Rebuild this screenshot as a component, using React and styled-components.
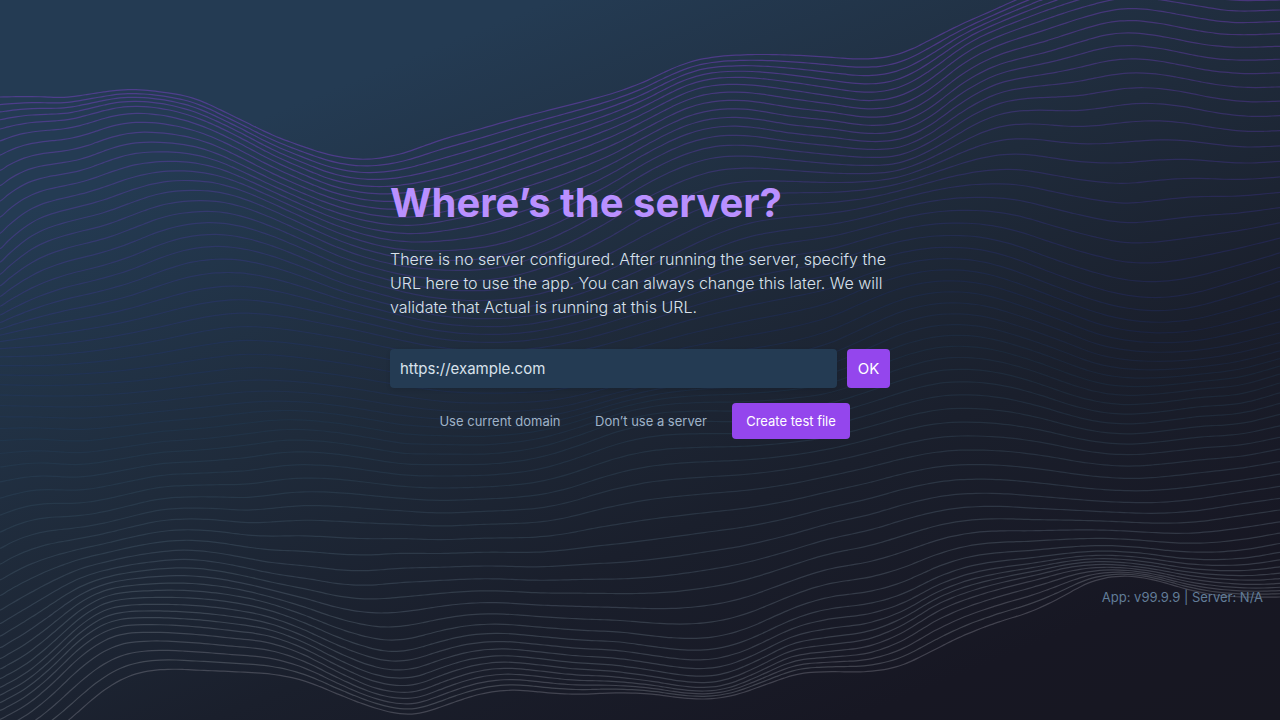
import React from 'react';
import styled, { createGlobalStyle, css } from 'styled-components';

const GlobalStyle = createGlobalStyle`
  *, *::before, *::after { box-sizing: border-box; }
  html, body { margin: 0; padding: 0; }
  body {
    background: #181722;
    color: #d9e2ec;
    font-family: Inter, "Liberation Sans", sans-serif;
    font-size: 13px;
  }
`;

/* Contour lines: each entry is [line index, flat list of x, y points]. */
const KEY_CURVES = [
  [0, [0,97,35,96.5,65,97.5,90,94,127,89.5,165,92.5,190,97,233,116,277,137,300,145.5,333,155.7,363,159.5,390,156.5,447,138,480,129,513,119.5,547,110.7,580,102.3,613,93.3,647,80.7,670,69.5,693,61,713,57,733,55.3,797,55.3,830,57.3,862,59,890,56.5,910,50,930,40,963,23.5,987,13,1016,0,1050,-14,1127,-34,1190,-38,1280,-30]],
  [4, [0,129,20,124,43,121.5,67,120,90,114.5,115,108,133,106.3,165,109,200,119,233,134,277,157,300,167,333,180,377,186.7,413,183.5,447,176,480,166,513,155,547,143,580,132,613,120,647,105,670,93,693,83,713,78.5,733,77.3,797,83,830,88,873,92.3,897,88.3,917,79,930,70.7,963,46.7,980,37,997,29.5,1030,16.5,1078,0,1127,-11,1190,-6,1230,0,1280,0]],
  [8, [0,185.7,17,174,37,166.7,63,162.7,83,158.7,110,148.7,133,143,160,142.3,187,145,213,152,240,164,273,180,300,192,333,205,367,214,390,217,413,217,447,211,480,202,513,191,547,180,580,168,613,154,647,136,670,124,693,114.5,713,110,733,108.7,797,117,830,120.3,870,125.5,890,124.5,910,119,930,108,960,85,980,73,1000,64,1017,59.3,1047,52,1080,42,1105,35,1128,32.7,1160,36,1190,42,1215,46,1240,47.3,1280,46.3]],
  [13, [0,262.3,17,246.5,37,232.5,60,224,83,218,103,213,133,202,160,193.5,195,190.3,220,192.3,240,197.5,267,208,300,223,333,238,367,250,400,257.5,430,260,467,260,500,256,547,240,600,213,650,182,690,164,715,157.5,745,156,790,160,830,163.7,870,165.5,895,164,920,155.5,945,142,970,127,990,117.5,1010,112,1030,110.3,1080,110.5,1105,107.5,1125,104.5,1150,103.3,1180,106,1215,112.5,1250,116.5,1280,115.7]],
  [18, [0,315,30,300,60,289,100,279,133,269,160,258,190,249,220,246.3,245,249,275,257,310,270,345,284,380,294,430,306,480,310,520,308,570,297,620,279,670,256,710,237,750,223,790,217,830,213.3,870,206.5,910,196,950,187.5,975,184.5,997,183.7,1020,185,1050,191,1090,199,1127,203.3,1160,200,1190,197,1240,196,1280,192.3]],
  [23, [0,348.7,60,344,110,337,160,327,200,318,240,313,280,316,320,323,360,331,400,340,430,346,480,351,530,349,580,340,640,323,700,304,750,291,790,283,830,275,870,261,900,253,930,248,953,247.3,980,249.5,1010,257,1050,272,1090,286,1125,295,1157,297.7,1190,294,1230,283,1280,267.3]],
  [28, [0,395,60,396,100,395,150,391,200,385,253,380,300,382,350,388,400,396,450,402,500,403,560,399,620,385,680,371,740,362,790,354,830,343,870,325,900,312,930,304.5,950,302.7,980,305,1020,316,1060,330,1100,345,1140,351.5,1165,352.3,1200,350,1230,345,1280,333]],
  [34, [0,467,33,463,83,464.5,120,459,160,452.5,200,450,240,446,290,440,330,442,370,448,400,453,440,454,500,453,540,447,580,435,620,421,660,413,700,411,740,411,780,409,830,403,870,391,910,377.5,940,370.5,968,369.3,1000,373,1040,384,1075,396,1105,403,1130,404.7,1160,402.5,1200,397.5,1240,394,1280,383]],
  [39, [0,548.3,20,538.5,45,531.5,73,528.3,100,524,133,516,160,510,190,508,220,508.7,247,510.3,270,508.5,300,505.7,340,506.5,380,509.5,400,510.7,440,513,480,511.5,510,510.3,540,508,570,502,600,493,647,482.5,700,477.3,750,474,790,469,830,461.7,870,452.5,910,442.5,945,436.7,978,436,1010,438,1045,443,1080,450,1110,454,1133,454.7,1165,452,1200,448,1240,445,1280,437.3]],
  [44, [0,623.7,25,609,50,594,80,578,110,569,150,562,187,559.3,215,562,240,566.5,270,573,310,579,340,584,367,585.3,400,582.7,430,581,487,578.7,540,580.3,580,579.5,640,578,680,574,700,571,740,564,780,553.5,830,538.7,870,530,910,518,950,509,980,506.5,998,506.3,1030,508,1070,510,1110,512,1157,513.3,1190,511.5,1240,504,1280,498.3]],
  [49, [0,678.7,25,665,50,645,80,618,105,603,130,598.5,150,597.5,190,598,230,602,265,609,300,621,340,638,370,648,390,651.7,410,650,440,641.5,470,635,500,633.3,540,636.5,580,640,620,642,660,647.5,690,650.3,715,649,745,641,780,625,800,616.5,830,608.7,870,603.5,900,595,940,576,970,566,1000,561,1030,558,1065,553.5,1100,551,1140,553,1180,558,1215,559.7,1245,558,1280,552.3]],
  [54, [0,719.3,25,706,50,686,80,657,105,640,125,633.5,145,632.3,190,634,230,638,270,643,300,653,340,673,375,688,400,692.5,415,692,440,683,470,673,500,668.3,540,671,570,674.5,610,676.5,650,681,690,687,705,687.7,725,685,760,671,790,657,830,651.3,870,646,900,634,940,610,970,598,1000,589,1040,579,1075,570,1095,567.5,1115,567.3,1150,571,1190,579,1230,583.5,1260,584.5,1280,583.3]],
  [58, [0,765,30,748,69,720,95,697,118,681,140,672.5,165,669.3,200,670.3,240,672,275,674.5,305,681,340,695,375,708,400,714,413,714.5,435,709,460,700,490,692,515,690,550,693,575,694.3,620,692.7,650,694,690,698.7,710,699,735,695,770,683,800,673.5,830,671.7,870,671.5,900,666,930,652,960,637,1000,621.5,1030,612,1060,598,1090,582,1110,577,1128,576,1150,579,1190,590,1215,595,1240,597,1280,597]],
];

const LINE_STOPS = [
  [0, [133, 66, 214, 0.44]],
  [8, [128, 66, 212, 0.36]],
  [14, [104, 62, 196, 0.3]],
  [20, [66, 58, 176, 0.24]],
  [26, [34, 58, 150, 0.18]],
  [32, [36, 74, 110, 0.2]],
  [38, [70, 104, 124, 0.24]],
  [46, [112, 130, 146, 0.3]],
  [58, [146, 148, 158, 0.34]],
];

const WIDTH = 1280;
const STEP = 8;

/* Cubic interpolation; with `monotone` it never overshoots the given values. */
function makeSpline(xs, ys, monotone) {
  const n = xs.length;
  const d = [];
  for (let i = 0; i < n - 1; i++) d.push((ys[i + 1] - ys[i]) / (xs[i + 1] - xs[i]));
  const m = [d[0]];
  for (let i = 1; i < n - 1; i++) {
    const h0 = xs[i] - xs[i - 1];
    const h1 = xs[i + 1] - xs[i];
    if (!monotone) m.push((d[i - 1] * h1 + d[i] * h0) / (h0 + h1));
    else if (d[i - 1] * d[i] <= 0) m.push(0);
    else {
      const a = 2 * h1 + h0;
      const b = h1 + 2 * h0;
      m.push((a + b) / (a / d[i - 1] + b / d[i]));
    }
  }
  m.push(d[n - 2]);
  return (x) => {
    let i = 0;
    while (i < n - 2 && x > xs[i + 1]) i++;
    const h = xs[i + 1] - xs[i];
    const t = (x - xs[i]) / h;
    const t2 = t * t;
    const t3 = t2 * t;
    return (
      (2 * t3 - 3 * t2 + 1) * ys[i] +
      (t3 - 2 * t2 + t) * h * m[i] +
      (3 * t2 - 2 * t3) * ys[i + 1] +
      (t3 - t2) * h * m[i + 1]
    );
  };
}

/* Average of neighbouring samples, which keeps the curves soft at their nodes. */
function soften(f, x) {
  const r = Math.min(12, x, WIDTH - x);
  return (f(x - r) + 2 * f(x - r / 2) + 3 * f(x) + 2 * f(x + r / 2) + f(x + r)) / 9;
}

function lineColor(k) {
  let s = 0;
  while (s < LINE_STOPS.length - 2 && k > LINE_STOPS[s + 1][0]) s++;
  const [k0, c0] = LINE_STOPS[s];
  const [k1, c1] = LINE_STOPS[s + 1];
  const t = (k - k0) / (k1 - k0);
  const [r, g, b, alpha] = c0.map((v, i) => v + (c1[i] - v) * t);
  return `rgba(${Math.round(r)}, ${Math.round(g)}, ${Math.round(b)}, ${alpha.toFixed(3)})`;
}

function buildLines() {
  const count = 59;
  const keys = KEY_CURVES.map((c) => c[0]);
  const curves = KEY_CURVES.map(([, p]) =>
    makeSpline(p.filter((_, i) => i % 2 === 0), p.filter((_, i) => i % 2 === 1), false),
  );
  const points = Array.from({ length: count }, () => []);
  for (let x = 0; x <= WIDTH; x += STEP) {
    const across = makeSpline(keys, curves.map((f) => soften(f, x)), true);
    for (let k = 0; k < count; k++) points[k].push([x, across(k)]);
  }
  return points.map((p, k) => {
    let path = `M${p[0][0]} ${p[0][1].toFixed(2)}`;
    for (let i = 0; i < p.length - 1; i++) {
      const a = p[Math.max(0, i - 1)][1];
      const b = p[i][1];
      const c = p[i + 1][1];
      const e = p[Math.min(p.length - 1, i + 2)][1];
      path += `C${(p[i][0] + STEP / 3).toFixed(1)} ${(b + (c - a) / 6).toFixed(2)} ${(p[i + 1][0] - STEP / 3).toFixed(1)} ${(c - (e - b) / 6).toFixed(2)} ${p[i + 1][0]} ${c.toFixed(2)}`;
    }
    return { path, stroke: lineColor(k) };
  });
}

const LINES = buildLines();

const Page = styled.div`
  position: relative;
  display: flex;
  flex-direction: column;
  min-height: 100vh;
  padding-top: 176px;
  overflow: hidden;
  background: linear-gradient(158deg, #243b53 0%, #243b53 18%, #1f2b3b 45%, #1a1f2c 65%, #171723 86%, #171721 100%);
`;

const Waves = styled.svg`
  position: absolute;
  inset: 0;
  width: 100%;
  height: 100%;
  pointer-events: none;
`;

const Main = styled.main`
  position: relative;
  width: 100%;
  max-width: 500px;
  margin: 0 auto;
`;

const Title = styled.h1`
  margin: 0;
  color: #b990ff;
  font-size: 40px;
  font-weight: 700;
  line-height: 54px;
`;

const Description = styled.p`
  margin: 17px 0 30px;
  font-size: 16px;
  font-weight: 300;
  line-height: 24px;
`;

const UrlForm = styled.form`
  display: flex;
  gap: 10px;
`;

const UrlInput = styled.input`
  flex: 1;
  min-width: 0;
  height: 39px;
  padding: 0 10px;
  border: 0;
  border-radius: 4px;
  outline: none;
  background: #243b53;
  box-shadow: 0 2px 4px rgba(0, 0, 0, 0.1);
  color: #d9e2ec;
  font: inherit;
  font-size: 15px;
  &::placeholder { color: #d9e2ec; opacity: 1; }
`;

const Actions = styled.div`
  display: flex;
  justify-content: center;
  gap: 14px;
  margin-top: 15px;
`;

const Button = styled.button`
  height: 36px;
  min-width: ${(p) => p.$minWidth}px;
  padding: 0 8px;
  border: 0;
  border-radius: 4px;
  background: transparent;
  color: #9fb3c8;
  font: inherit;
  font-size: 13px;
  white-space: nowrap;
  cursor: pointer;
  ${(p) => p.$primary && css`
    background: #9446ed;
    color: #ffffff;
  `}
`;

const SubmitButton = styled(Button)`
  height: 39px;
  font-size: 15px;
`;

const Version = styled.footer`
  position: relative;
  align-self: flex-end;
  margin: 150px 17px 0 0;
  color: #627d98;
  font-size: 13px;
  line-height: 16px;
`;

export default function App() {
  return (
    <Page>
      <GlobalStyle />
      <Waves viewBox="0 0 1280 720" preserveAspectRatio="xMidYMid slice" fill="none" aria-hidden="true">
        {LINES.map((line, i) => (
          <path key={i} d={line.path} stroke={line.stroke} strokeWidth="1.2" />
        ))}
      </Waves>
      <Main>
        <Title>Where’s the server?</Title>
        <Description>
          There is no server configured. After running the server, specify the URL here to use the
          app. You can always change this later. We will validate that Actual is running at this
          URL.
        </Description>
        <UrlForm onSubmit={(e) => e.preventDefault()}>
          <UrlInput type="text" aria-label="Server URL" placeholder="https://example.com" />
          <SubmitButton type="submit" $primary $minWidth={43}>OK</SubmitButton>
        </UrlForm>
        <Actions>
          <Button type="button" $minWidth={140}>Use current domain</Button>
          <Button type="button" $minWidth={134}>Don’t use a server</Button>
          <Button type="button" $primary $minWidth={118}>Create test file</Button>
        </Actions>
      </Main>
      <Version>App: v99.9.9 | Server: N/A</Version>
    </Page>
  );
}
